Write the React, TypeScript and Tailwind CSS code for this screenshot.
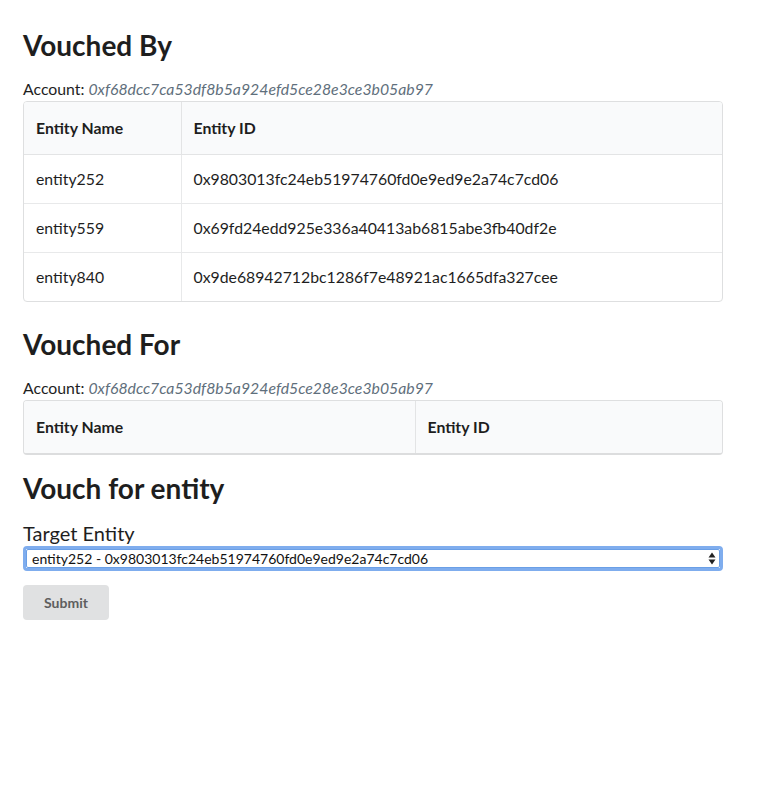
import React from "react";

const rows = [
  ["entity252", "0x9803013fc24eb51974760fd0e9ed9e2a74c7cd06"],
  ["entity559", "0x69fd24edd925e336a40413ab6815abe3fb40df2e"],
  ["entity840", "0x9de68942712bc1286f7e48921ac1665dfa327cee"],
];

const account = "0xf68dcc7ca53df8b5a924efd5ce28e3ce3b05ab97";

function Heading({ children, className = "" }: { children: React.ReactNode; className?: string }) {
  return (
    <h1 className={`text-[28px] leading-[36px] font-bold text-[#1e1e1e] ${className}`}>{children}</h1>
  );
}

function Account() {
  return (
    <div className="text-[15.8px] leading-[20px] text-[#1e1e1e]">
      Account: <span className="italic text-[#5f6f7c]">{account}</span>
    </div>
  );
}

export default function App() {
  return (
    <div
      className="min-h-[795px] bg-white px-[23px] pt-[27px] text-[#1e1e1e]"
      style={{ fontFamily: "Lato, 'Open Sans', 'Liberation Sans', sans-serif" }}
    >
      <div className="w-[700px]">
        <Heading>Vouched By</Heading>
        <div className="mt-[16px]">
          <Account />
        </div>
        <div className="mt-[2px] rounded-[4px] border border-[#dedfe0] overflow-hidden">
          <table className="w-full border-collapse text-[15.8px]">
            <thead>
              <tr className="bg-[#f9fafb]">
                <th className="w-[157px] h-[52px] border-b border-r border-[#e3e4e5] px-[12px] text-left font-bold">
                  Entity Name
                </th>
                <th className="h-[52px] border-b border-[#e3e4e5] px-[12px] text-left font-bold">Entity ID</th>
              </tr>
            </thead>
            <tbody>
              {rows.map((r, i) => (
                <tr key={r[0]} className={i > 0 ? "border-t border-[#e8e9ea]" : ""}>
                  <td className="h-[49px] border-r border-[#e8e9ea] px-[12px]">{r[0]}</td>
                  <td className="h-[49px] px-[12px]">{r[1]}</td>
                </tr>
              ))}
            </tbody>
          </table>
        </div>

        <Heading className="mt-[24px]">Vouched For</Heading>
        <div className="mt-[16px]">
          <Account />
        </div>
        <div className="mt-[2px] rounded-[4px] border border-[#dedfe0] border-b-2 border-b-[#dcddde] overflow-hidden">
          <table className="w-full border-collapse text-[15.8px]">
            <thead>
              <tr className="bg-[#f9fafb]">
                <th className="w-[391px] h-[52px] border-r border-[#e3e4e5] px-[12px] text-left font-bold">
                  Entity Name
                </th>
                <th className="h-[52px] px-[12px] text-left font-bold">Entity ID</th>
              </tr>
            </thead>
          </table>
        </div>

        <Heading className="mt-[15px]">Vouch for entity</Heading>
        <div className="mt-[15px] text-[20px] leading-[24px] text-[#1e1e1e]">Target Entity</div>
        <div className="relative mt-[1px] h-[25px] rounded-[4px] border-[3px] border-[#7fadee] bg-white">
          <div className="absolute inset-0 rounded-[2px] border border-[#6a9fe6]" />
          <div className="pl-[6px] text-[14px] leading-[19px] text-[#111]">
            entity252 - 0x9803013fc24eb51974760fd0e9ed9e2a74c7cd06
          </div>
          <svg className="absolute right-[4px] top-[3px]" width="8" height="13" viewBox="0 0 8 13">
            <path d="M4 0.5 L7.5 5.5 H0.5 Z" fill="#222" />
            <path d="M4 12.5 L7.5 7.5 H0.5 Z" fill="#222" />
          </svg>
        </div>
        <button className="mt-[14px] h-[35px] w-[86px] rounded-[4px] bg-[#e0e1e2] text-[14px] font-bold text-[#5e5e5e]">
          Submit
        </button>
      </div>
    </div>
  );
}
